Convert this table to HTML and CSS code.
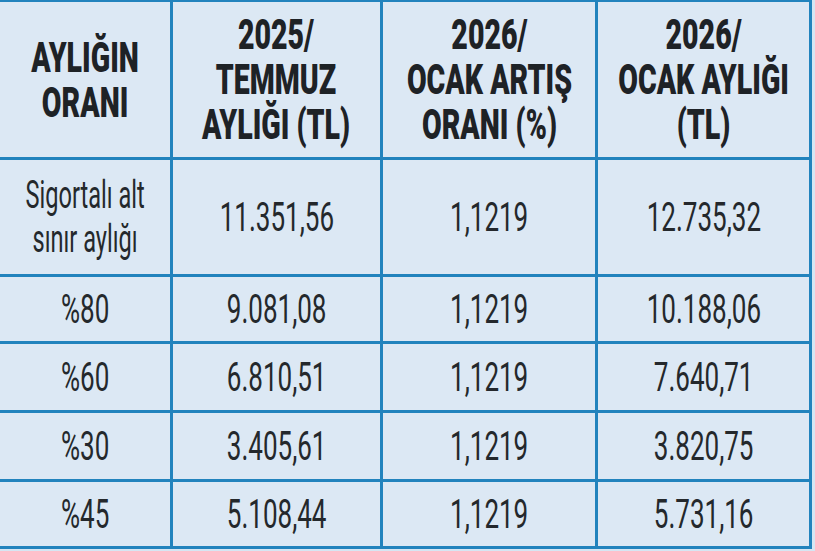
FILE: index.html
```html
<!DOCTYPE html>
<html lang="tr">
<head>
<meta charset="utf-8">
<title>Aylık oranları</title>
<link rel="stylesheet" href="styles.css">
</head>
<body>
<div class="table">
  <div class="cell head"><span class="sq">AYLIĞIN<br>ORANI</span></div>
  <div class="cell head"><span class="sq">2025/<br>TEMMUZ<br>AYLIĞI (TL)</span></div>
  <div class="cell head"><span class="sq">2026/<br>OCAK ARTIŞ<br>ORANI (%)</span></div>
  <div class="cell head"><span class="sq">2026/<br>OCAK AYLIĞI<br>(TL)</span></div>

  <div class="cell label"><span class="sq">Sigortalı alt<br>sınır aylığı</span></div>
  <div class="cell"><span class="sq">11.351,56</span></div>
  <div class="cell"><span class="sq">1,1219</span></div>
  <div class="cell"><span class="sq">12.735,32</span></div>

  <div class="cell"><span class="sq">%80</span></div>
  <div class="cell"><span class="sq">9.081,08</span></div>
  <div class="cell"><span class="sq">1,1219</span></div>
  <div class="cell"><span class="sq">10.188,06</span></div>

  <div class="cell"><span class="sq">%60</span></div>
  <div class="cell"><span class="sq">6.810,51</span></div>
  <div class="cell"><span class="sq">1,1219</span></div>
  <div class="cell"><span class="sq">7.640,71</span></div>

  <div class="cell"><span class="sq">%30</span></div>
  <div class="cell"><span class="sq">3.405,61</span></div>
  <div class="cell"><span class="sq">1,1219</span></div>
  <div class="cell"><span class="sq">3.820,75</span></div>

  <div class="cell"><span class="sq">%45</span></div>
  <div class="cell"><span class="sq">5.108,44</span></div>
  <div class="cell"><span class="sq">1,1219</span></div>
  <div class="cell"><span class="sq">5.731,16</span></div>
</div>
</body>
</html>
```

FILE: styles.css
```css
html, body {
  margin: 0;
  padding: 0;
  background: #d6e6f3;
}

.table {
  display: grid;
  grid-template-columns: 170px 207px 212px 211px;
  grid-template-rows: 155px 114px 64px 66px 66px 64px;
  gap: 3px;
  padding: 2px 3px 3px 0;
  width: fit-content;
  background: #2283bd;
}

.cell {
  background: #dce8f4;
  display: flex;
  align-items: center;
  justify-content: center;
  text-align: center;
  color: #24282c;
  font-family: Roboto, "Liberation Sans", sans-serif;
  font-size: 40px;
  line-height: 47px;
  font-weight: 400;
  white-space: nowrap;
  overflow: hidden;
}

.sq {
  display: inline-block;
  transform: scaleX(0.65);
  transform-origin: center;
}

.label {
  font-size: 38px;
  line-height: 44px;
}

.label .sq {
  transform: scaleX(0.62);
}

.head {
  color: #1e2226;
  font-size: 42px;
  line-height: 45px;
  font-weight: 900;
}

.head .sq {
  transform: scaleX(0.68);
}
```
